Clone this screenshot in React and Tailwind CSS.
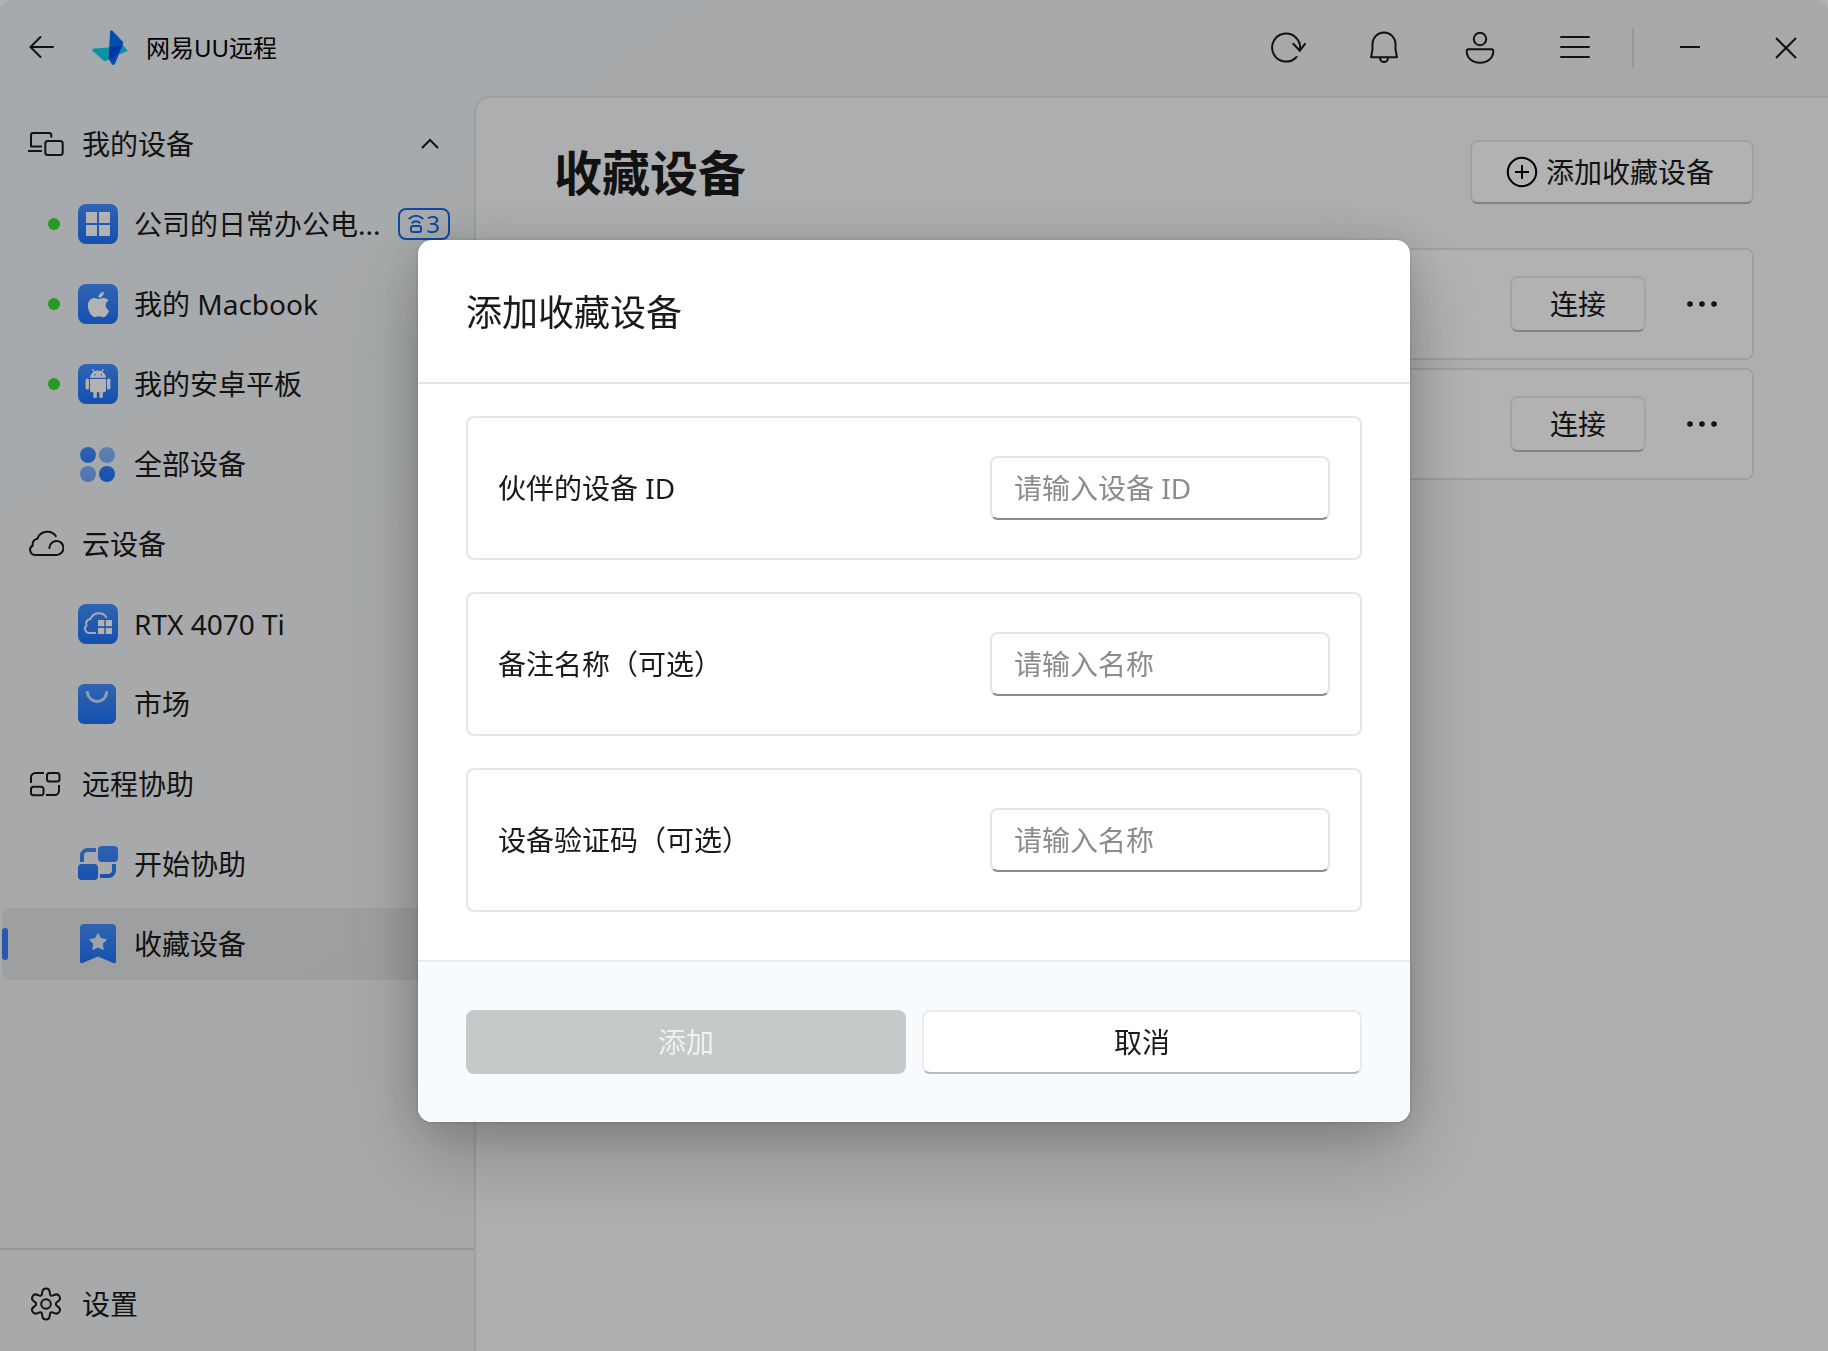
import React, { useState } from 'react';
import { FaApple } from 'react-icons/fa';

// Shared gradient for the blue sidebar icons
const BlueGradient = ({ id }) => (
  <defs>
    <linearGradient id={id} x1="0" y1="0" x2="0" y2="40" gradientUnits="userSpaceOnUse">
      <stop offset="0" stopColor="#4690ff" />
      <stop offset="1" stopColor="#1d73fa" />
    </linearGradient>
  </defs>
);

const Tile = ({ id, children }) => (
  <svg viewBox="0 0 40 40" className="h-10 w-10 shrink-0" aria-hidden="true">
    <BlueGradient id={id} />
    <rect width="40" height="40" rx="8" fill={`url(#${id})`} />
    {children}
  </svg>
);

const Glyph = ({ id, children }) => (
  <svg viewBox="0 0 40 40" className="h-10 w-10 shrink-0" aria-hidden="true">
    <BlueGradient id={id} />
    {children}
  </svg>
);

const LineIcon = ({ children }) => (
  <svg
    viewBox="0 0 36 36"
    className="h-9 w-9 shrink-0"
    fill="none"
    stroke="currentColor"
    strokeWidth="2"
    strokeLinejoin="round"
    aria-hidden="true"
  >
    {children}
  </svg>
);

const WindowsIcon = () => (
  <Tile id="g-windows">
    <path d="M8 8h11v11H8zM21 8h11v11H21zM8 21h11v11H8zM21 21h11v11H21z" fill="#fff" />
  </Tile>
);

const AppleIcon = () => (
  <span className="flex h-10 w-10 shrink-0 items-center justify-center rounded-lg bg-linear-to-b from-[#4690ff] to-[#1d73fa] text-white">
    <FaApple size={29} />
  </span>
);

const AndroidIcon = () => (
  <Tile id="g-android">
    <path d="M12 13.8a8 7.3 0 0 1 16 0z" fill="#fff" />
    <path d="M14.8 5.6l2 3M25.2 5.6l-2 3" stroke="#fff" strokeWidth="1.2" strokeLinecap="round" />
    <circle cx="16.8" cy="10.8" r="0.8" fill="#2f80fc" />
    <circle cx="23.3" cy="10.8" r="0.8" fill="#2f80fc" />
    <path d="M12 15h16v11.3a2 2 0 0 1-2 2H14a2 2 0 0 1-2-2z" fill="#fff" />
    <rect x="7.6" y="14.6" width="3.4" height="11" rx="1.7" fill="#fff" />
    <rect x="29" y="14.6" width="3.4" height="11" rx="1.7" fill="#fff" />
    <rect x="15.4" y="25" width="3.4" height="9" rx="1.5" fill="#fff" />
    <rect x="21.4" y="25" width="3.4" height="9" rx="1.5" fill="#fff" />
  </Tile>
);

const AllDevicesIcon = () => (
  <Glyph id="g-all">
    <circle cx="10" cy="11" r="8" fill="url(#g-all)" />
    <circle cx="29" cy="11" r="8" fill="url(#g-all)" opacity="0.6" />
    <circle cx="10" cy="30" r="8" fill="url(#g-all)" opacity="0.6" />
    <circle cx="29" cy="30" r="8" fill="url(#g-all)" />
  </Glyph>
);

const CloudPcIcon = () => (
  <Tile id="g-cloud">
    <path
      d="M18 29H11a4.3 4.3 0 0 1-2.5-7.6a4.5 4.5 0 0 1 4-6.4a9 9 0 0 1 16.2-1.2"
      fill="none"
      stroke="#fff"
      strokeOpacity="0.9"
      strokeWidth="2"
    />
    <path d="M20 16h6.3v6.2H20zM27.8 16H34v6.2h-6.2zM20 24h6.3v6H20zM27.8 24H34v6h-6.2z" fill="#fff" />
  </Tile>
);

const MarketIcon = () => (
  <Glyph id="g-market">
    <rect width="38" height="40" rx="6" fill="url(#g-market)" />
    <path
      d="M9.4 8.6c1 5.8 5 8.8 9.7 8.8s8.6-3 9.6-8.8"
      fill="none"
      stroke="#e4f0fb"
      strokeOpacity="0.85"
      strokeWidth="3"
      strokeLinecap="round"
    />
  </Glyph>
);

const AssistIcon = () => (
  <Glyph id="g-assist">
    <path
      d="M18 6H9.5a5.500 5.500 0 0 0-5.500 5.500V18M22 32h8.500a5.500 5.500 0 0 0 5.500-5.500V20"
      fill="none"
      stroke="url(#g-assist)"
      strokeWidth="4"
    />
    <rect x="20" y="2" width="20" height="16" rx="4" fill="url(#g-assist)" />
    <rect x="0" y="20" width="20" height="16" rx="4" fill="url(#g-assist)" />
  </Glyph>
);

const BookmarkIcon = () => (
  <Glyph id="g-bookmark">
    <path
      d="M6 0h28a4 4 0 0 1 4 4v33.5a1.8 1.8 0 0 1-2.6 1.6L20 32.6L4.6 39.1A1.8 1.8 0 0 1 2 37.5V4a4 4 0 0 1 4-4z"
      fill="url(#g-bookmark)"
    />
    <path
      d="M20 9.5l2.7 5.1 5.7 1-4 4.2 .8 5.7L20 23l-5.2 2.5 .8-5.7-4-4.2 5.7-1z"
      fill="#e2ecf3"
      stroke="#e2ecf3"
      strokeWidth="1"
      strokeLinejoin="round"
    />
  </Glyph>
);

const DevicesIcon = () => (
  <LineIcon>
    <path d="M23.3 11.5V9.2a2.3 2.3 0 0 0-2.3-2.3H5.3A2.3 2.3 0 0 0 3 9.2V20.5H14M0 25H14" />
    <rect x="17.3" y="15" width="17.4" height="14" rx="2.5" />
  </LineIcon>
);

const CloudIcon = () => (
  <LineIcon>
    <path d="M21.5 22.8A7 7 0 1 1 28.5 28.9H7.5A5 5 0 0 1 4.8 19.5A5.4 5.4 0 0 1 9.3 12.8A10.6 10.6 0 0 1 28.3 10.8" />
  </LineIcon>
);

const RemoteIcon = () => (
  <LineIcon>
    <path d="M16 6.9H7.5A4.5 4.5 0 0 0 3 11.4V17M18 29.1h8.5a4.5 4.5 0 0 0 4.5-4.5V19" />
    <rect x="19" y="7" width="12.5" height="8.5" rx="2.5" />
    <rect x="3" y="20.7" width="12.5" height="8.5" rx="2.5" />
  </LineIcon>
);

// Six-lobed gear, smoothed with quadratic curves around the centre (18, 18)
const gearPath = () => {
  const points = [];
  for (let i = 0; i < 6; i++) {
    const angle = i * 60 - 90;
    points.push([15.9, angle - 13], [15.9, angle + 13], [8, angle + 30]);
  }
  const xy = points.map(([r, a]) => [
    18 + r * Math.cos((a * Math.PI) / 180),
    18 + r * Math.sin((a * Math.PI) / 180),
  ]);
  const mid = (a, b) => `${((a[0] + b[0]) / 2).toFixed(2)} ${((a[1] + b[1]) / 2).toFixed(2)}`;
  let d = `M${mid(xy[xy.length - 1], xy[0])}`;
  xy.forEach((p, i) => {
    d += `Q${p[0].toFixed(2)} ${p[1].toFixed(2)} ${mid(p, xy[(i + 1) % xy.length])}`;
  });
  return `${d}Z`;
};

const GearIcon = () => (
  <LineIcon>
    <path d={gearPath()} />
    <circle cx="18" cy="18" r="4.8" />
  </LineIcon>
);

const Logo = () => (
  <svg viewBox="0 0 35 35" className="h-9 w-9 shrink-0" aria-hidden="true">
    <path d="M0.4 20.2Q-.6 18.2 2 18L16.5 17L30 14.6L34.2 19.5Q34.8 20.5 33.8 21L21 26L13.8 29.9Q12.4 30.5 11 29.6Z" fill="#0fd0ec" />
    <path d="M17.7 1Q18.2-.4 19.5.6L30 11.5Q30.6 12.5 30.2 13.5L22.4 32.8Q20.8 35 19.2 33L16.3 28.5L16.7 17Z" fill="#0470fa" />
    <path d="M16.7 17L29.8 14.6L24.5 24.5L16.4 28.5Z" fill="#0349ea" />
  </svg>
);

const ShareIcon = () => (
  <svg viewBox="0 0 16 20" className="h-5 w-4" fill="none" stroke="currentColor" strokeWidth="2" aria-hidden="true">
    <path d="M0.7 5Q8-1.5 15.3 5M3.8 9.3Q8 5.3 12.2 9.3" />
    <rect x="3" y="12" width="10" height="6" rx="2" />
  </svg>
);

const groups = [
  {
    title: '我的设备',
    icon: <DevicesIcon />,
    collapsible: true,
    items: [
      { name: '公司的日常办公电...', icon: <WindowsIcon />, online: true, shared: 3 },
      { name: '我的 Macbook', icon: <AppleIcon />, online: true },
      { name: '我的安卓平板', icon: <AndroidIcon />, online: true },
      { name: '全部设备', icon: <AllDevicesIcon /> },
    ],
  },
  {
    title: '云设备',
    icon: <CloudIcon />,
    items: [
      { name: 'RTX 4070 Ti', icon: <CloudPcIcon /> },
      { name: '市场', icon: <MarketIcon /> },
    ],
  },
  {
    title: '远程协助',
    icon: <RemoteIcon />,
    items: [
      { name: '开始协助', icon: <AssistIcon /> },
      { name: '收藏设备', icon: <BookmarkIcon />, active: true },
    ],
  },
];

const fields = [
  { id: 'deviceId', label: '伙伴的设备 ID', placeholder: '请输入设备 ID' },
  { id: 'remark', label: '备注名称（可选）', placeholder: '请输入名称' },
  { id: 'code', label: '设备验证码（可选）', placeholder: '请输入名称' },
];

const TitleBar = () => (
  <header className="flex h-24 shrink-0 items-center">
    <button type="button" aria-label="返回" className="ml-[18px] flex h-12 w-12 items-center justify-center">
      <svg viewBox="0 0 28 28" className="h-7 w-7" fill="none" stroke="currentColor" strokeWidth="2" strokeLinecap="round">
        <path d="M25 13H2.5M12.5 3L2.5 13L12.5 23" />
      </svg>
    </button>
    <div className="ml-[26px] flex items-center gap-[18px]">
      <Logo />
      <span className="text-2xl text-black">网易UU远程</span>
    </div>
    <div className="ml-auto flex items-center pr-0.5">
      <button type="button" aria-label="刷新" className="flex h-16 w-24 items-center justify-center">
        <svg viewBox="0 0 36 36" className="h-9 w-9" fill="none" stroke="currentColor" strokeWidth="2" strokeLinecap="round">
          <path d="M26.5 27A14 14 0 1 1 30 19.5M23.3 13.8L29.8 20.8L35 13.8" />
        </svg>
      </button>
      <button type="button" aria-label="通知" className="flex h-16 w-24 items-center justify-center">
        <svg viewBox="0 0 36 36" className="h-9 w-9" fill="none" stroke="currentColor" strokeWidth="2" strokeLinejoin="round">
          <path d="M6.5 19.5V14a11.5 11.5 0 0 1 23 0v5.5L31 27.2H5L6.5 19.5" />
          <path d="M14 27.5a4 4.6 0 0 0 8 0" />
        </svg>
      </button>
      <button type="button" aria-label="账号" className="flex h-16 w-24 items-center justify-center">
        <svg viewBox="0 0 36 36" className="h-9 w-9" fill="none" stroke="currentColor" strokeWidth="2">
          <circle cx="18" cy="9" r="6.2" />
          <path d="M6.5 19.2h23a1.8 1.8 0 0 1 1.8 1.8c0 7-5.5 11.7-13.3 11.7S4.7 28 4.7 21a1.8 1.8 0 0 1 1.8-1.8z" />
        </svg>
      </button>
      <button type="button" aria-label="菜单" className="flex h-16 w-24 items-center justify-center">
        <svg viewBox="0 0 32 32" className="h-8 w-8" stroke="currentColor" strokeWidth="2" strokeLinecap="round">
          <path d="M1 5h28M1 15h28M1 25h28" />
        </svg>
      </button>
      <span className="mr-4 ml-2 h-10 w-0.5 bg-black/10" />
      <div className="flex gap-4">
        <button type="button" aria-label="最小化" className="flex h-16 w-20 items-center justify-center">
          <svg viewBox="0 0 24 24" className="h-6 w-6" stroke="currentColor" strokeWidth="2">
            <path d="M2 11h20" />
          </svg>
        </button>
        <button type="button" aria-label="关闭" className="flex h-16 w-20 items-center justify-center">
          <svg viewBox="0 0 24 24" className="h-6 w-6" stroke="currentColor" strokeWidth="2">
            <path d="M2 2l20 20M22 2L2 22" />
          </svg>
        </button>
      </div>
    </div>
  </header>
);

const SidebarItem = ({ item }) => (
  <a
    href="#"
    className={`relative flex h-[72px] items-center rounded-lg pr-6 ${item.active ? 'bg-black/6' : ''}`}
  >
    {item.active && <span className="absolute left-0 h-8 w-1.5 rounded-full bg-[#3c7fff]" />}
    <span className="flex w-19 shrink-0 items-center pl-[46px]">
      {item.online && <span className="h-3 w-3 rounded-full bg-[#36dd36]" />}
    </span>
    {item.icon}
    <span className="ml-4 whitespace-nowrap">{item.name}</span>
    {item.shared && (
      <span className="ml-auto flex h-8 w-[52px] items-center justify-center gap-0.5 rounded-lg border-2 border-[#1469e8] text-2xl text-[#1469e8]">
        <ShareIcon />
        {item.shared}
      </span>
    )}
  </a>
);

const Sidebar = () => (
  <aside className="flex w-[474px] shrink-0 flex-col">
    <nav className="flex flex-1 flex-col gap-2 pt-3 pl-0.5">
      {groups.map((group) => (
        <React.Fragment key={group.title}>
          <div className="flex h-[72px] items-center gap-[18px] pr-[34px] pl-[26px]">
            {group.icon}
            <span>{group.title}</span>
            {group.collapsible && (
              <button type="button" aria-label="收起" className="ml-auto">
                <svg viewBox="0 0 20 20" className="h-5 w-5" fill="none" stroke="currentColor" strokeWidth="2" strokeLinecap="round">
                  <path d="M2.5 13.5L10 6l7.5 7.5" />
                </svg>
              </button>
            )}
          </div>
          {group.items.map((item) => (
            <SidebarItem key={item.name} item={item} />
          ))}
        </React.Fragment>
      ))}
    </nav>
    <div className="border-t-2 border-black/10 pt-[18px] pb-[11px]">
      <a href="#" className="flex h-[72px] items-center gap-[18px] pl-7">
        <GearIcon />
        设置
      </a>
    </div>
  </aside>
);

const FavoriteCard = () => (
  <div className="flex h-28 items-center justify-end gap-7 rounded-lg border-2 border-[#e4e4e4] bg-white pr-[22px]">
    <button
      type="button"
      className="h-14 w-34 rounded-lg border-2 border-[#e9e9e9] border-b-[#bdbdbd] bg-white"
    >
      连接
    </button>
    <button type="button" aria-label="更多" className="flex h-14 w-14 items-center justify-center">
      <svg viewBox="0 0 32 8" className="h-2 w-8" fill="currentColor">
        <circle cx="4" cy="4" r="2.8" />
        <circle cx="16" cy="4" r="2.8" />
        <circle cx="28" cy="4" r="2.8" />
      </svg>
    </button>
  </div>
);

const AddFavoriteDialog = () => {
  const [values, setValues] = useState({ deviceId: '', remark: '', code: '' });

  const handleChange = (e) => {
    const { name, value } = e.target;
    setValues({ ...values, [name]: value });
  };

  return (
    <div className="fixed inset-0 flex items-start justify-center bg-black/30 pt-60">
      <form
        role="dialog"
        aria-labelledby="dialog-title"
        onSubmit={(e) => e.preventDefault()}
        className="w-full max-w-[992px] overflow-hidden rounded-[14px] bg-white shadow-[0_0_0_2px_rgba(0,0,0,0.05),0_32px_80px_rgba(0,0,0,0.24),0_4px_42px_rgba(0,0,0,0.12)]"
      >
        <div className="flex h-36 items-center border-b-2 border-[#e6e6e6] px-12 pt-1">
          <h2 id="dialog-title" className="text-4xl">添加收藏设备</h2>
        </div>

        <div className="flex flex-col gap-8 px-12 pt-8 pb-12">
          {fields.map((field) => (
            <div
              key={field.id}
              className="flex h-36 items-center justify-between rounded-lg border-2 border-[#e5e5e5] px-[30px]"
            >
              <label htmlFor={field.id}>{field.label}</label>
              <input
                id={field.id}
                name={field.id}
                type="text"
                value={values[field.id]}
                onChange={handleChange}
                placeholder={field.placeholder}
                className="h-16 w-[340px] rounded-lg border-2 border-[#e5e5e5] border-b-[#8a8a8a] bg-white px-[22px] outline-none placeholder:text-[#8c8c8c]"
              />
            </div>
          ))}
        </div>

        <div className="grid grid-cols-2 gap-4 border-t-2 border-[#e7ebee] bg-[#f7fbfe] p-12">
          <button
            type="submit"
            disabled={!values.deviceId}
            className="h-16 rounded-lg bg-[#c5c9ca] text-[#f0f1f1]"
          >
            添加
          </button>
          <button
            type="button"
            className="h-16 rounded-lg border-2 border-[#ebebec] border-b-[#bbbbbc] bg-white"
          >
            取消
          </button>
        </div>
      </form>
    </div>
  );
};

const App = () => {
  return (
    <div className="flex min-h-screen flex-col rounded-t-xl bg-linear-to-br from-[#edf4f6] via-[#f0f3f5] via-30% to-[#f0f0f2] font-['Noto_Sans','Noto_Sans_CJK_SC',sans-serif] text-[28px] leading-10 text-[#1a1a1a]">
      <TitleBar />
      <div className="flex flex-1">
        <Sidebar />
        <main className="flex-1 rounded-tl-2xl border-t-2 border-l-2 border-[#e1e2e4] bg-[#f8fafc] pt-[42px] pr-[74px] pl-[78px]">
          <div className="flex items-center justify-between">
            <h1 className="pt-0.5 text-5xl font-bold">收藏设备</h1>
            <button
              type="button"
              className="flex h-16 items-center gap-2 rounded-lg border-2 border-[#e7e7e7] border-b-[#bdbdbd] bg-white pr-[38px] pl-[34px]"
            >
              <svg viewBox="0 0 32 32" className="h-8 w-8" fill="none" stroke="#000" strokeWidth="2">
                <circle cx="16" cy="16" r="14.2" />
                <path d="M16 9v14M9 16h14" />
              </svg>
              添加收藏设备
            </button>
          </div>
          <div className="mt-11 flex flex-col gap-2">
            <FavoriteCard />
            <FavoriteCard />
          </div>
        </main>
      </div>
      <AddFavoriteDialog />
    </div>
  );
};

export default App;
